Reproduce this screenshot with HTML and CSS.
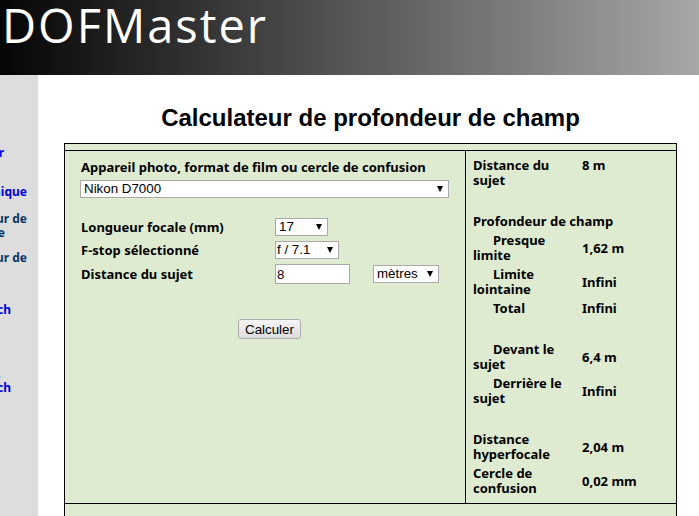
FILE: index.html
```html
<!DOCTYPE html>
<html lang="fr">
<head>
<meta charset="utf-8">
<title>DOFMaster – Calculateur de profondeur de champ</title>
<link rel="stylesheet" href="styles.css">
</head>
<body>
<header class="masthead">
  <span class="brand">DOFMaster</span>
</header>

<div class="page">
  <nav class="sidenav">
    <a class="nav-link nav-link--first" href="#"><span class="nav-line nav-line--r4">Calculateur</span></a>
    <a class="nav-link nav-link--gap25" href="#"><span class="nav-line">Version électronique</span></a>
    <a class="nav-link nav-link--seen nav-link--gap13" href="#"><span class="nav-line">Calculateur de</span><span class="nav-line nav-line--r5">poche</span></a>
    <a class="nav-link nav-link--seen nav-link--gap11" href="#"><span class="nav-line">Tableau de profondeur de</span></a>
    <a class="nav-link nav-link--gap38" href="#"><span class="nav-line nav-line--r11">iPod touch</span></a>
    <a class="nav-link nav-link--gap50" href="#"><span class="nav-line nav-line--r1">iPhone.&lrm;</span><span class="nav-line nav-line--r11">iPod touch</span></a>
  </nav>

  <main class="content">
    <h1 class="title">Calculateur de profondeur de champ</h1>

    <div class="calc">
      <div class="calc-strip"></div>

      <form class="calc-form" action="#">
        <label class="camera-label" for="camera">Appareil photo, format de film ou cercle de confusion</label>
        <span class="select select--camera">
          <select id="camera"><option>Nikon D7000</option></select>
        </span>

        <div class="fields">
          <label class="field-label" for="focal">Longueur focale (mm)</label>
          <span class="select select--focal">
            <select id="focal"><option>17</option></select>
          </span>
          <span></span>

          <label class="field-label" for="fstop">F-stop sélectionné</label>
          <span class="select select--fstop">
            <select id="fstop"><option>f / 7.1</option></select>
          </span>
          <span></span>

          <label class="field-label" for="distance">Distance du sujet</label>
          <input class="text-input" id="distance" type="text" value="8">
          <span class="select select--units">
            <select><option>mètres</option></select>
          </span>
        </div>

        <div class="actions">
          <button class="btn" type="button">Calculer</button>
        </div>
      </form>

      <div class="calc-results">
        <div class="results">
          <div class="r-label">Distance du sujet</div>
          <div class="r-value r-value--top">8 m</div>

          <div class="r-gap"></div>

          <div class="r-head">Profondeur de champ</div>

          <div class="r-label r-label--sub">Presque limite</div>
          <div class="r-value">1,62 m</div>

          <div class="r-label r-label--sub">Limite lointaine</div>
          <div class="r-value">Infini</div>

          <div class="r-label r-label--sub">Total</div>
          <div class="r-value">Infini</div>

          <div class="r-gap"></div>

          <div class="r-label r-label--sub">Devant le sujet</div>
          <div class="r-value">6,4 m</div>

          <div class="r-label r-label--sub">Derrière le sujet</div>
          <div class="r-value">Infini</div>

          <div class="r-gap"></div>

          <div class="r-label">Distance hyperfocale</div>
          <div class="r-value">2,04 m</div>

          <div class="r-label">Cercle de confusion</div>
          <div class="r-value">0,02 mm</div>
        </div>
      </div>

      <div class="calc-strip calc-strip--bottom"></div>
    </div>
  </main>
</div>
</body>
</html>
```

FILE: styles.css
```css
* {
  box-sizing: border-box;
}

html,
body {
  margin: 0;
  padding: 0;
}

body {
  font-family: "Noto Sans", "DejaVu Sans", sans-serif;
  color: #000;
  background: #fff;
}

/* ---------- masthead ---------- */
.masthead {
  height: 75px;
  padding: 2px 0 0 2px;
  background: linear-gradient(to right, #050505 0%, #a7a7a7 100%);
}

.brand {
  display: block;
  font-family: "Open Sans", "Noto Sans", sans-serif;
  font-size: 47px;
  line-height: 47px;
  letter-spacing: 2px;
  color: #fff;
}

/* ---------- page frame ---------- */
.page {
  display: flex;
  min-height: calc(100vh - 75px);
}

.sidenav {
  flex: 0 0 38px;
  background: #dddddd;
  overflow: hidden;
  padding-top: 71px;
}

.nav-link {
  display: block;
  font-size: 12px;
  font-weight: bold;
  line-height: 14px;
  color: #0000d8;
  text-decoration: none;
}

.nav-link--seen {
  color: #0c3462;
}

.nav-link--gap25 { margin-top: 25px; }
.nav-link--gap13 { margin-top: 13px; }
.nav-link--gap11 { margin-top: 11px; }
.nav-link--gap38 { margin-top: 38px; }
.nav-link--gap50 { margin-top: 50px; }

/* each line is pushed against the right edge and runs out to the left */
.nav-line {
  display: flex;
  justify-content: flex-end;
  white-space: nowrap;
  padding-right: 11px;
}

.nav-line--r1 { padding-right: 37px; color: #4a7cff; }
.nav-line--r4 { padding-right: 34px; }
.nav-line--r5 { padding-right: 33px; }
.nav-line--r11 { padding-right: 27px; }

.content {
  flex: 1;
  padding: 0 22px 0 26px;
}

.title {
  margin: 29px 0 12px;
  font-family: "Liberation Sans", Arial, sans-serif;
  font-size: 24px;
  line-height: 27px;
  font-weight: bold;
  text-align: center;
}

/* ---------- calculator panel ---------- */
.calc {
  display: grid;
  grid-template-columns: 400px 1fr;
  gap: 1px;
  border: 1px solid #000;
  background: #000;
}

.calc-strip {
  grid-column: 1 / -1;
  height: 6px;
  background: #dfebd0;
}

.calc-strip--bottom {
  height: 24px;
}

.calc-form,
.calc-results {
  background: #dfebd0;
  font-size: 13px;
  font-weight: bold;
}

.calc-form {
  margin: 0;
  padding: 8px 15px 0 15px;
}

.camera-label {
  display: block;
  line-height: 16px;
  padding-left: 1px;
}

.select {
  position: relative;
  display: inline-block;
  vertical-align: middle;
}

.select::after {
  content: "";
  position: absolute;
  right: 6px;
  top: 6px;
  border-left: 3.5px solid transparent;
  border-right: 3.5px solid transparent;
  border-top: 6px solid #000;
  pointer-events: none;
}

.select select {
  -webkit-appearance: none;
  appearance: none;
  display: block;
  height: 18px;
  margin: 0;
  padding: 0 0 0 3px;
  border: 1px solid #a9a9a9;
  border-radius: 0;
  background: #fff;
  color: #000;
  font-family: "Liberation Sans", Arial, sans-serif;
  font-size: 13.33px;
  line-height: 16px;
}

.select--camera {
  display: block;
  margin-top: 5px;
  width: 369px;
}

.select--camera select { width: 369px; }
.select--focal select { width: 53px; }
.select--fstop select { width: 64px; padding-left: 1px; }
.select--units select { width: 66px; }

.select--units {
  margin-left: 23px;
}

.fields {
  display: grid;
  grid-template-columns: 195px auto 1fr;
  row-gap: 5px;
  align-items: center;
  justify-items: start;
  margin-top: 20px;
}

.field-label {
  line-height: 16px;
  padding-left: 1px;
}

.text-input {
  width: 75px;
  height: 20px;
  margin: 0;
  padding: 0 0 0 1px;
  border: 1px solid #a9a9a9;
  background: #fff;
  color: #1a0010;
  font-family: "Liberation Sans", Arial, sans-serif;
  font-size: 13.33px;
}

.actions {
  margin-top: 35px;
  padding-left: 158px;
}

.btn {
  width: 63px;
  height: 20px;
  padding: 0;
  border: 1px solid #adadad;
  border-radius: 3px;
  background: linear-gradient(#f5f5f5, #dcdcdc);
  color: #000;
  font-family: "Liberation Sans", Arial, sans-serif;
  font-size: 13.33px;
}

/* ---------- results ---------- */
.calc-results {
  padding: 5px 0 5px 7px;
}

.results {
  display: grid;
  grid-template-columns: 109px 1fr;
  line-height: 15px;
}

.r-label,
.r-value,
.r-head {
  padding: 2px 0;
}

.r-label {
  padding-right: 4px;
}

.r-label--sub {
  text-indent: 20px;
}

.r-value {
  align-self: center;
}

.r-value--top {
  align-self: start;
}

.r-head {
  grid-column: 1 / -1;
}

.r-gap {
  grid-column: 1 / -1;
  height: 22px;
}
```
